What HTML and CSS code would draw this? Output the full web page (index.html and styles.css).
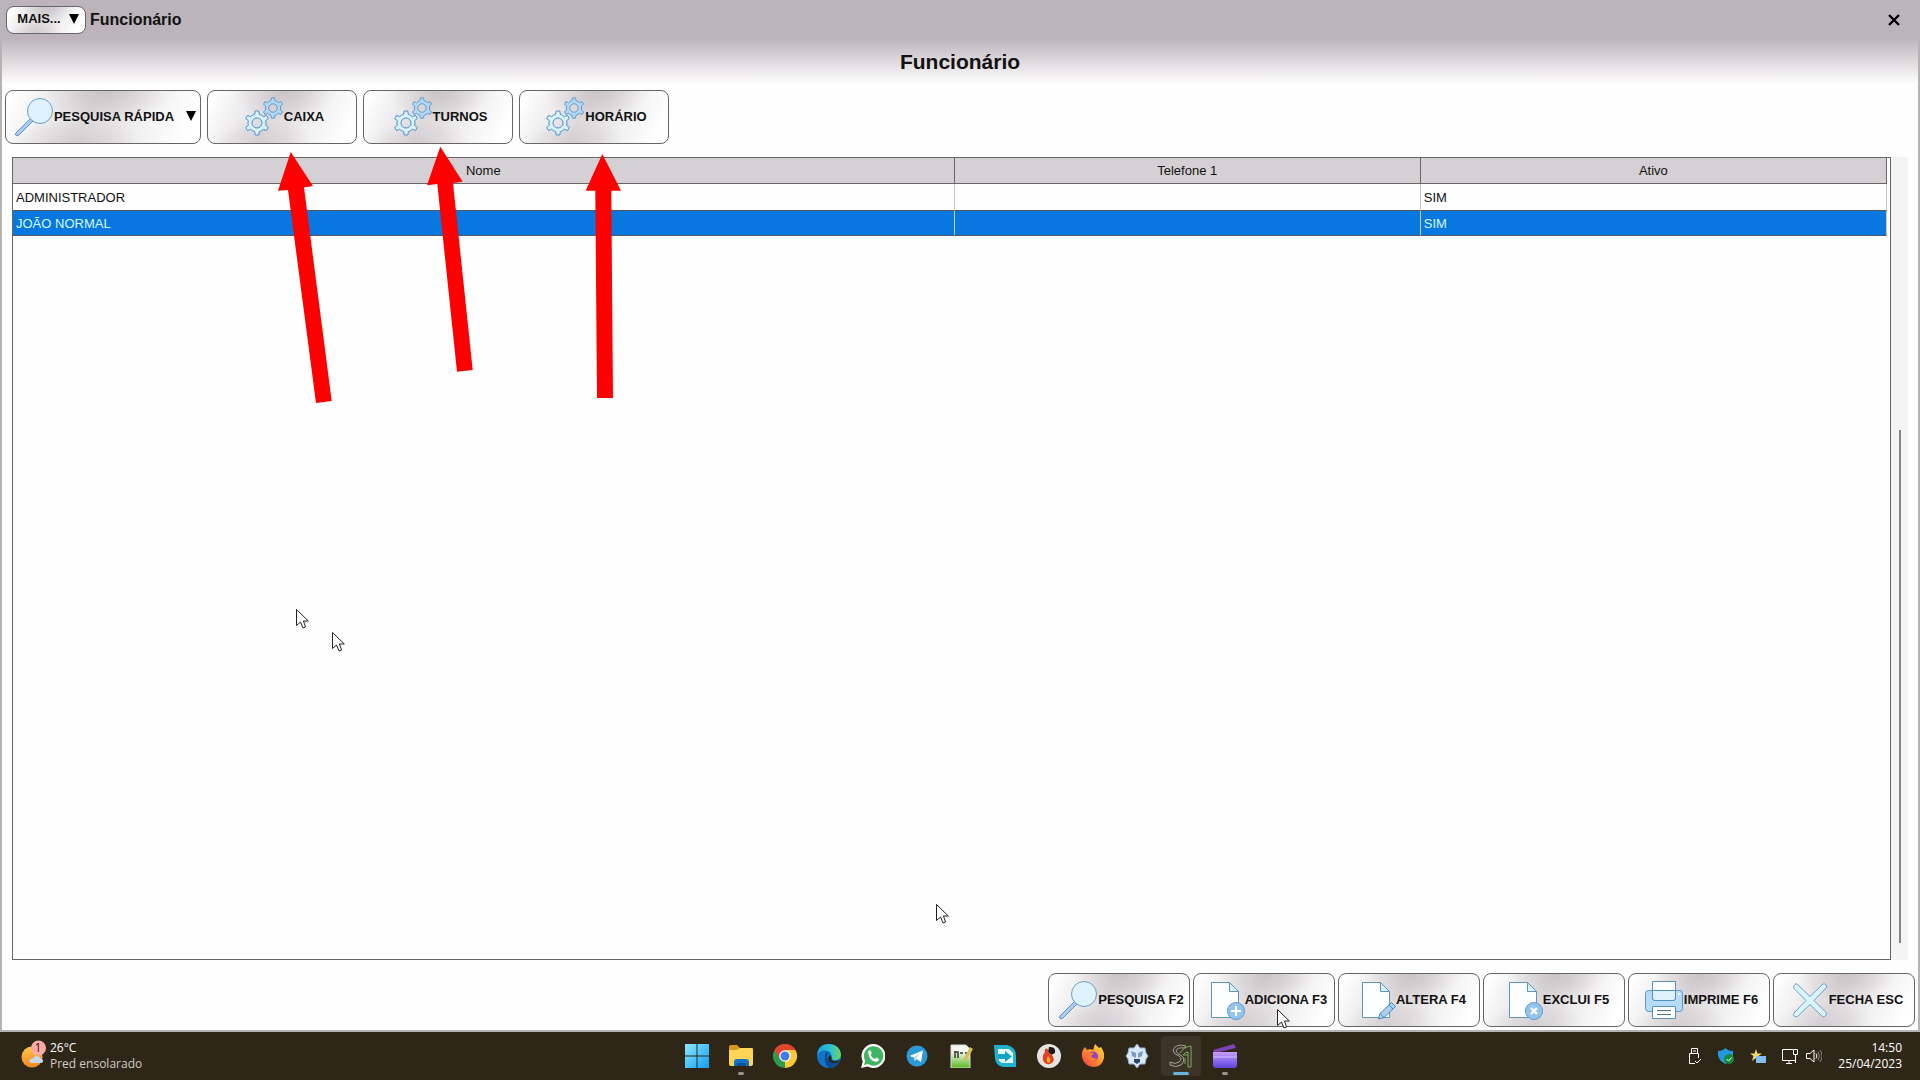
FILE: index.html
```html
<!DOCTYPE html>
<html lang="pt-BR">
<head>
<meta charset="utf-8">
<title>Funcionário</title>
<link rel="stylesheet" href="styles.css">
</head>
<body>
<svg class="defs" aria-hidden="true">
  <symbol id="search" viewBox="0 0 40 40">
    <path d="M2 36 16.500 21.500 19 24 5 38Q3 39.500 1.800 38.200 1 37 2 36Z" fill="#a9cdf0" stroke="#5f93c4"/>
    <circle cx="26" cy="14" r="12.500" fill="#def3fe" stroke="#6c9cc8"/>
  </symbol>
  <symbol id="gear" viewBox="-13 -13 26 26">
    <path d="M-2.300-8.700-1.800-12H1.800L2.300-8.700A9 9 0 0 1 6.400-6.300L9.500-7.600 11.300-4.400 8.700-2.400A9 9 0 0 1 8.700 2.400L11.300 4.400 9.500 7.600 6.400 6.300A9 9 0 0 1 2.300 8.700L1.800 12H-1.800L-2.300 8.700A9 9 0 0 1-6.400 6.300L-9.500 7.600-11.300 4.400-8.700 2.400A9 9 0 0 1-8.700-2.400L-11.300-4.400-9.500-7.600-6.400-6.300A9 9 0 0 1-2.300-8.700ZM5 0A5 5 0 1 0-5 0 5 5 0 1 0 5 0Z" fill-rule="evenodd" stroke="#4f8fc9"/>
  </symbol>
  <symbol id="gears" viewBox="0 0 40 40">
    <use href="#gear" x="0" y="13" width="26" height="26" fill="#d9f1fd"/>
    <use href="#gear" x="18" y="0" width="22" height="22" fill="#b3d8f6"/>
  </symbol>
  <symbol id="page" viewBox="0 0 40 40">
    <path d="M6.500 2.500H24.500L33.500 11.500V37.500H6.500Z" fill="#fdfeff" stroke="#5e95bd"/>
    <path d="M24.500 2.500V11.500H33.500Z" fill="#d9f1fd" stroke="#5e95bd"/>
  </symbol>
  <symbol id="add" viewBox="0 0 40 40">
    <use href="#page"/>
    <circle cx="31" cy="31" r="8.500" fill="#93c4ee" stroke="#5e9bd0"/>
    <path d="M31 26V36M26 31H36" stroke="#fff" stroke-width="2"/>
  </symbol>
  <symbol id="edit" viewBox="0 0 40 40">
    <use href="#page"/>
    <path d="M22.500 39 24 33.500 35.500 22.500 39.500 26.500 28 37.500Z" fill="#a9d2f3" stroke="#4f88bb"/>
    <path d="M24 33.500 28 37.500M33 25 37 29" stroke="#4f88bb"/>
  </symbol>
  <symbol id="remove" viewBox="0 0 40 40">
    <use href="#page"/>
    <circle cx="31" cy="31" r="8.500" fill="#93c4ee" stroke="#5e9bd0"/>
    <path d="M28 28 34 34M34 28 28 34" stroke="#fff" stroke-width="2.400"/>
  </symbol>
  <symbol id="print" viewBox="0 0 40 40">
    <rect x="1.500" y="10.500" width="37" height="21" rx="3" fill="#b5dbf8" stroke="#5a97cb"/>
    <path d="M8.500 1.500H31.500V18Q31.500 20.500 29 20.500H11Q8.500 20.500 8.500 18Z" fill="#fdfeff" stroke="#5a8fb8"/>
    <path d="M8.500 10.500H31.500V18Q31.500 20.500 29 20.500H11Q8.500 20.500 8.500 18Z" fill="#def1fd" stroke="#5a8fb8"/>
    <path d="M8.500 26.500H31.500V38.500H8.500Z" fill="#fdfeff" stroke="#5a8fb8"/>
    <path d="M13 30.500H27M13 34.500H27" stroke="#52718a"/>
    <circle cx="35" cy="14" r="1" fill="#fff"/>
  </symbol>
  <symbol id="cross" viewBox="0 0 40 40">
    <path d="M8 4 21 16.500 34 4Q35.500 3 37 5T37 8L25 20.500 37 32.500Q38 34 36.500 35.700T33.500 36.500L21 24.500 8.500 36.500Q7 37.500 5.300 36T5 33L17 20.500 5 8.500Q4 7 5.500 5T8 4Z" fill="#dcf4fd" stroke="#6ba0c8"/>
  </symbol>
  <symbol id="down" viewBox="0 0 10 10"><path d="M0 0H10L5 10Z" fill="#000"/></symbol>
  <symbol id="pointer" viewBox="0 0 13 20">
    <path d="M.500.500V16.500L4.500 13 7 19 9.500 18 7.500 12H12.300Z" fill="#fff" stroke="#222"/>
  </symbol>
</svg>

<main class="window">
  <header class="titlebar">
    <button class="btn more" type="button">MAIS... <svg class="caret"><use href="#down"/></svg></button>
    <span class="caption">Funcionário</span>
    <button class="close" type="button" aria-label="Fechar"><svg viewBox="0 0 12 12"><path d="M1 1 11 11M11 1 1 11" stroke="#000" stroke-width="2.400"/></svg></button>
  </header>
  <h1 class="heading">Funcionário</h1>

  <nav class="toolbar">
    <button class="btn wide" type="button"><svg class="icon"><use href="#search"/></svg>PESQUISA RÁPIDA<svg class="caret"><use href="#down"/></svg></button>
    <button class="btn mid" type="button"><svg class="icon"><use href="#gears"/></svg>CAIXA</button>
    <button class="btn mid" type="button"><svg class="icon"><use href="#gears"/></svg>TURNOS</button>
    <button class="btn mid" type="button"><svg class="icon"><use href="#gears"/></svg>HORÁRIO</button>
  </nav>

  <section class="list">
    <div class="grid">
      <table>
        <colgroup><col class="name"><col><col></colgroup>
        <thead><tr><th>Nome</th><th>Telefone 1</th><th>Ativo</th></tr></thead>
        <tbody>
          <tr><td>ADMINISTRADOR</td><td></td><td>SIM</td></tr>
          <tr class="selected"><td>JOÃO NORMAL</td><td></td><td>SIM</td></tr>
        </tbody>
      </table>
    </div>
    <div class="track"><div class="thumb"></div></div>
  </section>

  <footer class="actions">
    <button class="btn" type="button"><svg class="icon"><use href="#search"/></svg>PESQUISA F2</button>
    <button class="btn" type="button"><svg class="icon"><use href="#add"/></svg>ADICIONA F3<svg class="pointer on-button"><use href="#pointer"/></svg></button>
    <button class="btn" type="button"><svg class="icon"><use href="#edit"/></svg>ALTERA F4</button>
    <button class="btn" type="button"><svg class="icon"><use href="#remove"/></svg>EXCLUI F5</button>
    <button class="btn" type="button"><svg class="icon"><use href="#print"/></svg>IMPRIME F6</button>
    <button class="btn" type="button"><svg class="icon"><use href="#cross"/></svg>FECHA ESC</button>
  </footer>

  <svg class="arrows" width="640" height="420" aria-hidden="true" fill="#fe0000">
    <path d="M290.700 152 313 186 304 187.600 331.700 401 316 403 288 190 278 190.800Z"/>
    <path d="M440.300 146.700 462.700 181.700 453 183 472.700 370 457 371.700 437.300 184 427 185.300Z"/>
    <path d="M602.300 154 621 190.800H611.300L613 398H597L595.300 190.800H585.700Z"/>
  </svg>
  <svg class="pointer p1"><use href="#pointer"/></svg>
  <svg class="pointer p2"><use href="#pointer"/></svg>
  <svg class="pointer p3"><use href="#pointer"/></svg>
</main>

<footer class="taskbar">
  <div class="weather">
    <svg width="28" height="28" viewBox="0 0 28 28">
      <defs><linearGradient id="sun" x2="0" y2="1"><stop stop-color="#ffc54a"/><stop offset="1" stop-color="#f08a1c"/></linearGradient></defs>
      <circle cx="12" cy="17" r="10.500" fill="url(#sun)"/>
      <path d="M12 23Q9 23 9.500 20.500 10.500 18 13 18.500 14 15.500 17.500 16 20 16.500 20.500 18.500 23.500 19 23 21.500 22.500 23 20.500 23Z" fill="#c7d8f5"/>
      <circle cx="18.500" cy="8" r="7.500" fill="#ffa9a9"/>
      <text x="18" y="12" text-anchor="middle" class="badge">1</text>
    </svg>
    <div><div>26°C</div><div class="dim">Pred ensolarado</div></div>
  </div>

  <div class="apps">
    <button class="app" aria-label="Iniciar"><svg viewBox="0 0 24 24"><defs><linearGradient id="win" x2="1" y2="1"><stop stop-color="#8ee8ff"/><stop offset="1" stop-color="#119bf0"/></linearGradient></defs><path d="M0 0H11.500V11.500H0ZM12.500 0H24V11.500H12.500ZM0 12.500H11.500V24H0ZM12.500 12.500H24V24H12.500Z" fill="url(#win)"/></svg></button>
    <button class="app open" aria-label="Explorador de Arquivos"><svg viewBox="0 0 24 24"><path d="M0 3Q0 1 2 1H8L11 4H22Q24 4 24 6V12H0Z" fill="#d89a1a"/><path d="M0 6H8L11 4H23Q24 4 24 6V20Q24 22 22 22H2Q0 22 0 20Z" fill="#ffd558"/><path d="M5 22V18Q5 15 8 15H17Q20 15 20 18V22Z" fill="#1374c4"/><path d="M8 19H17V22H8Z" fill="#0b5191"/></svg></button>
    <button class="app" aria-label="Chrome"><svg viewBox="0 0 24 24"><path d="M12 12 1.600 6A12 12 0 0 1 22.400 6Z" fill="#e0452f"/><path d="M12 12 22.400 6A12 12 0 0 1 12 24Z" fill="#fcc934"/><path d="M12 12V24A12 12 0 0 1 1.600 6Z" fill="#2c9b4b"/><path d="M12 6H22.400L17.200 15 12 24 17 15Z" fill="#fcc934"/><path d="M12 6H22.400A12 12 0 0 0 1.600 6L6.800 15Z" fill="#e0452f"/><circle cx="12" cy="12" r="5.800" fill="#fff"/><circle cx="12" cy="12" r="4.500" fill="#3c7de8"/></svg></button>
    <button class="app" aria-label="Edge"><svg viewBox="0 0 24 24"><defs><linearGradient id="edge" x2="1" y2="0"><stop stop-color="#1b9ee0"/><stop offset=".6" stop-color="#32c2cf"/><stop offset="1" stop-color="#6bd95a"/></linearGradient></defs><circle cx="12" cy="12" r="12" fill="#1273c7"/><path d="M0 11Q1 0 12 0 22 0 24 10 24 16 18 16 14 16 14.500 13 15 9 11 7 4 5 0 11Z" fill="url(#edge)"/><path d="M8 12Q8 8 12 8 8 12 11 16 15 20 22 18 18 24 12 24 7 20 8 12Z" fill="#0b4b95"/><path d="M13 11Q16 14 14 15.500 17 18.500 23 16L22 18Q13 21 11 15 11 12 13 11Z" fill="#2e2718"/></svg></button>
    <button class="app" aria-label="WhatsApp"><svg viewBox="0 0 24 24"><path d="M0 24 1.800 17.500A12 12 0 1 1 6.500 22.400Z" fill="#fff"/><path d="M3 21 4.200 16.800A9.700 9.700 0 1 1 7.200 20Z" fill="#3fb560"/><path d="M7 8Q8 5.500 9.500 6.500L10.800 9.300 9.700 11Q11 14 14 15L15.300 13.600 18 15Q18 17.500 15 17.800 8 17 7 8Z" fill="#fff"/></svg></button>
    <button class="app" aria-label="Telegram"><svg viewBox="0 0 24 24"><circle cx="12" cy="12" r="10.500" fill="#2b9bd8"/><path d="M4.500 12 18 6.500 16 18 11.500 15 9.500 17 9 13.500Z" fill="#fff"/><path d="M9 13.500 15.500 8.800 10.500 14.500 9.500 17Z" fill="#a9cfe6"/></svg></button>
    <button class="app" aria-label="Notepad++"><svg viewBox="0 0 24 24"><defs><linearGradient id="note" x2="0" y2="1"><stop offset=".3" stop-color="#f4f6ef"/><stop offset="1" stop-color="#55b81f"/></linearGradient></defs><path d="M2 1H17L21 5V24H2Z" fill="url(#note)" stroke="#d8dccf"/><path d="M6 7V14M6 8H9V14M11 9H14M16 9H18" stroke="#333" fill="none" stroke-width="1.500"/><path d="M14 16 21 3 24 5 17 17Z" fill="#d6bf4e"/></svg></button>
    <button class="app" aria-label="Acesso remoto"><svg viewBox="0 0 24 24"><path d="M1 1H14Q23 3 23 12V23H10Q2 21 2 14Z" fill="#1eb4cf"/><path d="M5 5H16L20 9V19H9Q5 17 5 13Z" fill="#e7fbff"/><path d="M5 10H12V7L19 12.500 12 18V15H5Z" fill="#14a5c4"/></svg></button>
    <button class="app" aria-label="Gravador"><svg viewBox="0 0 24 24"><circle cx="12" cy="12" r="12" fill="#e4e4e2"/><path d="M12 3Q19 2 18 9L14 11 11 8Z" fill="#191919"/><path d="M8 8Q7 3 11 5 10 8 14 10 19 15 15 19 10 22 7 18 4 13 8 8Z" fill="#e63f1d"/><path d="M11 12Q15 16 12 19 8 18 11 12Z" fill="#ffb52e"/></svg></button>
    <button class="app" aria-label="Firefox"><svg viewBox="0 0 24 24"><defs><linearGradient id="fox" x1="1" x2="0" y2="1"><stop stop-color="#ffe34d"/><stop offset=".5" stop-color="#ff9229"/><stop offset="1" stop-color="#f0304f"/></linearGradient></defs><path d="M1 13Q0 7 4 3L6 6 9 5 12 6 14 0 18 4 20 3Q24 9 23 14 21 23 12 23 3 22 1 13Z" fill="url(#fox)"/><circle cx="12" cy="12.500" r="5" fill="#8c43cb"/><path d="M6 8 13 9Q13 11 10 12 12 15 16 14 14 19 9 17 5 14 6 8Z" fill="#ff7831"/></svg></button>
    <button class="app" aria-label="Utilitário"><svg viewBox="0 0 24 24"><path d="M9 4 12 0 15 4 20 4 21 9 23 12 21 15 20 20 15 20 12 24 9 20 4 20 3 15 1 12 3 9 4 4Z" fill="#dbe8f6" stroke="#8fb1d8"/><path d="M6 7 11 9V14L7 12ZM18 7 13 9V14L17 12Z" fill="#7c9cc2"/><path d="M9 15H15V18L12 20 9 18Z" fill="#26456f"/></svg></button>
    <button class="app active" aria-label="Sistema"><svg viewBox="0 0 24 24" fill="none"><path d="M17 2Q7-1 4 6 4 10 10 12 14 15 10 18 6 21 1 18M15 4Q8 3 7 7 8 10 13 12 17 16 12 21 7 24 1 21V18M17 2 15 4" stroke="#a3a69a"/><path d="M11 9Q15 3 22 2V23H19V8Q16 8 14 11M14 11H19M16 14V20" stroke="#83ac5e"/></svg></button>
    <button class="app open" aria-label="Editor de vídeo"><svg viewBox="0 0 24 24"><defs><linearGradient id="clip" x2="0" y2="1"><stop stop-color="#c69bff"/><stop offset="1" stop-color="#5c43dd"/></linearGradient></defs><path d="M0 6 21 0 23 4 2 9Z" fill="#7c43b8"/><path d="M0 8H24V21Q24 24 21 24H3Q0 24 0 21Z" fill="url(#clip)"/><path d="M0 13H24" stroke="#d7bcff"/></svg></button>
  </div>

  <div class="tray">
    <svg viewBox="0 0 16 16" fill="none" stroke="#fff"><path d="M5.500 5V.500H11.500V5M3.500 5.500H12.500V10M3.500 5.500V15.500H9M9 13 11 15 15 11M7 3H10"/></svg>
    <svg viewBox="0 0 16 16"><path d="M0 3Q5 3 7.500 0 10 3 15 3V7Q14 13 7.500 16 1 13 0 7Z" fill="#2698e2"/><circle cx="11" cy="11" r="5" fill="#138a3d"/><path d="M8.500 11 10.500 13 13.500 9.500" stroke="#fff" fill="none"/></svg>
    <svg viewBox="0 0 16 16"><path d="M6 1 7.500 5.500H12L8.500 8 10 13 6 10 2 13 3.500 8 0 5.500H4.500Z" fill="#f4d866"/><rect x="6" y="8" width="10" height="7" fill="#83bfee"/></svg>
    <span class="pair">
      <svg viewBox="0 0 16 16" fill="none" stroke="#fff"><path d="M11 1.500H.500V12.500H14M4 15.500H10M7 12.500V15M11.500 1.500H15.500V6.500H11.500ZM13.500 6.500V15"/></svg>
      <svg viewBox="0 0 16 16" fill="none" stroke="#fff"><path d="M.500 5.500H4L8 2V14L4 10.500H.500ZM10 5.500Q12 8 10 10.500"/><path d="M12 3.500Q15 8 12 12.500M14 2Q18 8 14 14" stroke="#8d877b"/></svg>
    </span>
    <div class="clock"><div>14:50</div><div>25/04/2023</div></div>
  </div>
</footer>
</body>
</html>
```
FILE: styles.css
```css
* { box-sizing: border-box; }

body {
  margin: 0;
  min-height: 100vh;
  display: flex;
  flex-direction: column;
  font-family: "Liberation Sans", Arial, sans-serif;
  font-size: 13px;
  color: #111;
  overflow: hidden;
}

button { font: inherit; color: inherit; border: 0; background: none; padding: 0; }
.defs { position: absolute; width: 0; height: 0; }

.window {
  position: relative;
  flex: 1;
  display: flex;
  flex-direction: column;
  border: solid #b5b4b3;
  border-width: 0 2px 2px;
  background: linear-gradient(#bdb3bb 0, #bdb3bb 38px, #fefefe 84px);
}

.titlebar {
  display: flex;
  align-items: center;
  gap: 4px;
  height: 38px;
  margin: 0 -2px;
  padding: 1px 20px 0 6px;
  background: #bdb3bb;
}
.caption { flex: 1; font-size: 16px; font-weight: bold; }
.close svg { display: block; width: 12px; height: 12px; }

.heading {
  margin: 12px 0 16px;
  font-size: 21px;
  line-height: 24px;
  text-align: center;
}

.btn {
  position: relative;
  display: flex;
  align-items: center;
  justify-content: center;
  width: 142px;
  height: 54px;
  padding: 0 0 2px 4px;
  border: 1px solid #666;
  border-radius: 8px;
  background:
    radial-gradient(ellipse 35% 60% at 52% 0, rgba(190, 180, 185, .6), transparent),
    radial-gradient(ellipse 35% 45% at 38% 100%, rgba(205, 198, 202, .6), transparent),
    linear-gradient(115deg, #fff 4%, #eeecee 24%, #dedadc 42%, #e6e3e5 56%, #f3f2f3 70%, #fff 92%);
  font-weight: bold;
  white-space: nowrap;
}
.icon { flex: none; width: 40px; height: 40px; margin-top: 2px; }
.caret { width: 10px; height: 10px; }
.more { width: 80px; height: 28px; gap: 8px; }
.mid { width: 150px; }
.wide { width: 196px; }
.wide .caret { margin-left: 12px; }

.toolbar { display: flex; gap: 6px; padding: 0 3px; }

.list {
  flex: 1;
  display: flex;
  padding: 13px 10px;
}
.grid {
  flex: 1;
  border: 1px solid #666;
  padding-right: 3px;
  background: #fefefe;
}
table {
  width: 100%;
  table-layout: fixed;
  border-collapse: separate;
  border-spacing: 0;
}
.name { width: 50.25%; }
th, td { height: 26px; padding: 0 3px; border-right: 1px solid #c8c8c8; font-weight: normal; }
th { background: #d5d0d4; border-right-color: #666; border-bottom: 1px solid #666; }
td { text-align: left; }
.selected td {
  color: #d4fbff;
  background: #0877e0;
  border-top: 1px solid #556;
  border-bottom: 1px solid #556;
}

.track {
  display: flex;
  justify-content: center;
  width: 17px;
  padding: 273px 0 17px;
  background: #f4f4f4;
}
.thumb { width: 2px; background: #858585; }

.actions {
  display: flex;
  justify-content: flex-end;
  gap: 3px;
  padding: 0 3px 3px;
}

.arrows { position: absolute; top: 0; left: -2px; pointer-events: none; }
.pointer { position: absolute; width: 13px; height: 20px; }
.p1 { left: 294px; top: 609px; }
.p2 { left: 330px; top: 632px; }
.p3 { left: 934px; top: 904px; }
.on-button { left: 83px; top: 35px; }

.taskbar {
  display: grid;
  grid-template-columns: 1fr auto 1fr;
  align-items: center;
  height: 48px;
  padding: 0 18px 0 20px;
  background: #2e2718;
  color: #fff;
  font-family: "Open Sans", "Noto Sans", sans-serif;
  font-size: 12px;
  line-height: 16px;
}
.weather { display: flex; align-items: center; gap: 2px; }
.weather svg { margin-bottom: 4px; }
.badge { font-size: 12px; fill: #301010; }
.dim { color: #d0ccc3; }

.apps { display: flex; gap: 4px; }
.app {
  position: relative;
  display: grid;
  place-items: center;
  width: 40px;
  height: 40px;
  border-radius: 4px;
}
.app svg { width: 24px; height: 24px; }
.active { background: #3b3427; }
.open::after, .active::after {
  content: "";
  position: absolute;
  bottom: 1px;
  width: 6px;
  height: 3px;
  border-radius: 2px;
  background: #9c968b;
}
.active::after { width: 16px; background: #6bb3dd; }

.tray { display: flex; justify-content: flex-end; align-items: center; gap: 16px; }
.tray svg { display: block; width: 16px; height: 16px; }
.pair { display: flex; gap: 8px; }
.clock { text-align: right; }
```
